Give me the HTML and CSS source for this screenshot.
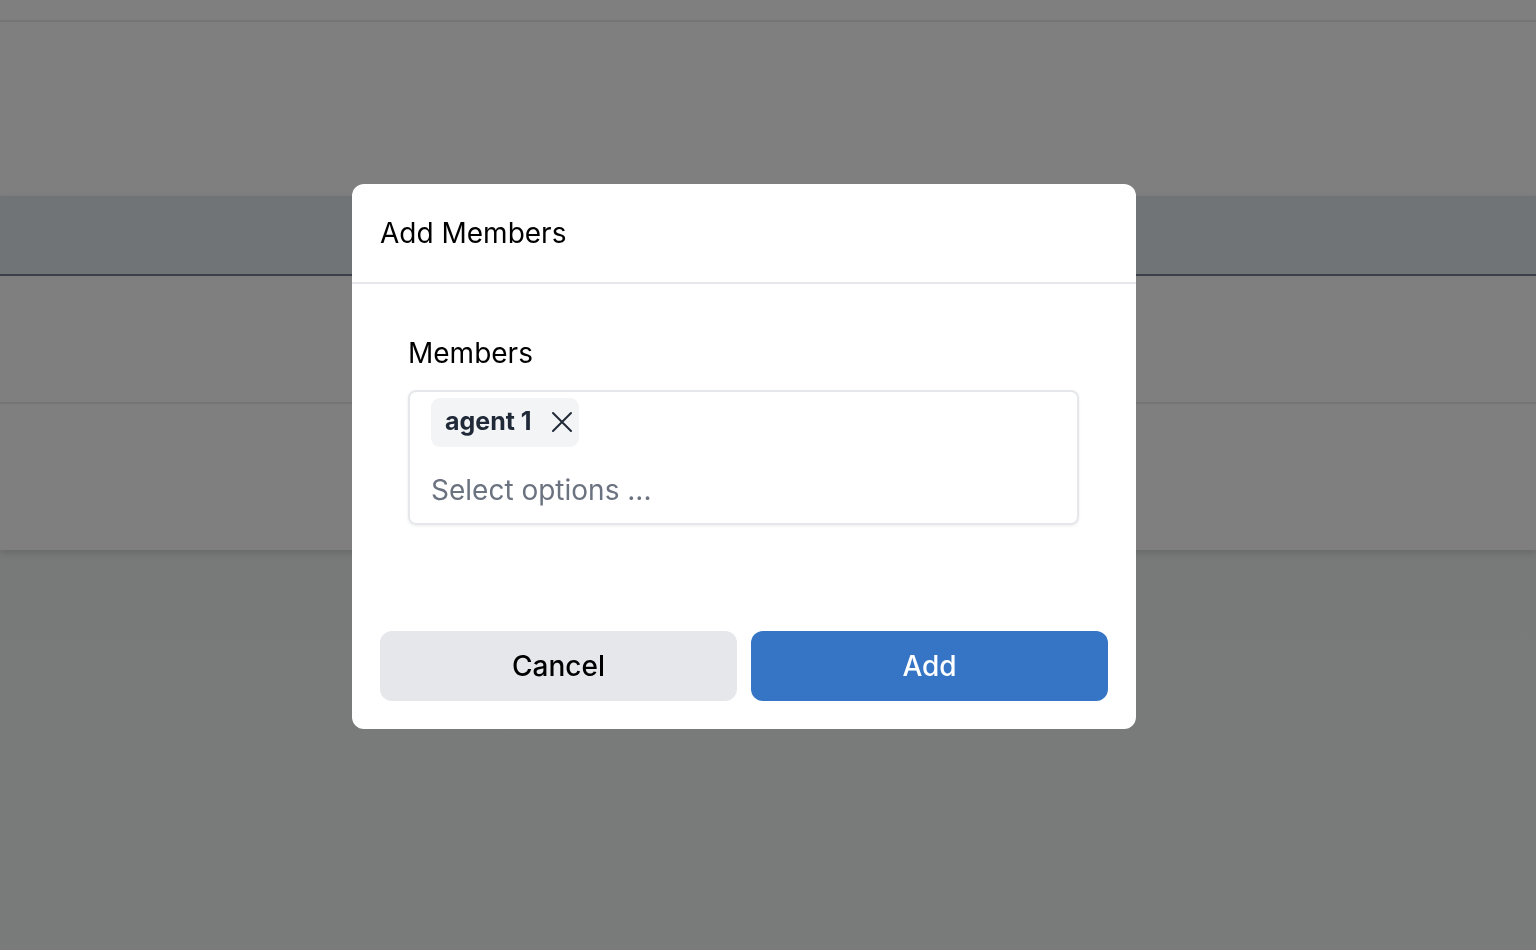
FILE: index.html
```html
<!DOCTYPE html>
<html lang="en">
<head>
<meta charset="utf-8">
<title>Add Members</title>
<link rel="stylesheet" href="styles.css">
</head>
<body>
<div class="page">
  <div class="topbar"></div>
  <div class="spacer"></div>
  <div class="table">
    <div class="thead"></div>
    <div class="row"></div>
    <div class="row last"></div>
  </div>
  <div class="rest"></div>
</div>

<div class="overlay">
  <div class="modal">
    <div class="modal-header">Add Members</div>
    <div class="modal-body">
      <div class="label">Members</div>
      <div class="multiselect">
        <div class="chip">
          <span class="chip-text">agent 1</span>
          <svg class="chip-x" width="22" height="22" viewBox="0 0 22 22" fill="none" stroke="#1f2937" stroke-width="2" stroke-linecap="round"><path d="M2 2L20 20M20 2L2 20"/></svg>
        </div>
        <div class="placeholder">Select options ...</div>
      </div>
    </div>
    <div class="modal-footer">
      <button class="btn btn-cancel">Cancel</button>
      <button class="btn btn-add">Add</button>
    </div>
  </div>
</div>
</body>
</html>
```
FILE: styles.css
```css
* { box-sizing: border-box; }
html, body { margin: 0; padding: 0; }
body {
  width: 1536px;
  height: 950px;
  overflow: hidden;
  font-family: Inter, "Noto Sans", "Liberation Sans", sans-serif;
  background: #f3f5f6;
}
.page { display: flex; flex-direction: column; height: 950px; }
.topbar { height: 22px; background: #fff; border-bottom: 2px solid #ebebeb; }
.spacer { height: 174px; background: #fff; }
.table { background: #fff; box-shadow: 0 3px 8px rgba(0,0,0,0.14); position: relative; z-index: 1; }
.thead { height: 80px; background: #e3e8ef; border-bottom: 2px solid #788195; }
.row { height: 128px; border-bottom: 2px solid #ebebeb; }
.row.last { height: 146px; border-bottom: none; }
.rest { flex: 1; background: linear-gradient(180deg, #f1f3f3, #f3f6f6); }

.overlay {
  position: fixed;
  inset: 0;
  z-index: 10;
  background: rgba(0,0,0,0.5);
  padding: 184px 0 0 352px;
}
.modal {
  width: 784px;
  height: 545px;
  background: #fff;
  border-radius: 12px;
  display: flex;
  flex-direction: column;
  overflow: hidden;
}
.modal-header {
  height: 100px;
  padding: 0 28px;
  display: flex;
  align-items: center;
  padding-bottom: 0;
  font-size: 28px;
  color: #000;
  border-bottom: 2px solid #e5e7eb;
}
.modal-body {
  flex: 1;
  padding: 51px 56px 0 56px;
}
.label {
  font-size: 28px;
  color: #000;
  line-height: 36px;
  margin-bottom: 19px;
}
.multiselect {
  width: 671px;
  height: 135px;
  border: 2px solid #e5e7eb;
  border-radius: 8px;
  box-shadow: 0 1px 3px rgba(0,0,0,0.08);
  padding: 6px 21px;
}
.chip {
  display: inline-flex;
  align-items: center;
  height: 49px;
  padding: 0 6px 0 14px;
  background: #f3f4f6;
  border-radius: 9px;
  gap: 19px;
}
.chip-text {
  font-size: 25px;
  font-weight: 700;
  color: #1f2937;
  line-height: 30px;
  margin-top: -3px;
}
.chip-x { display: block; margin-top: -2px; }
.placeholder {
  margin-top: 23px;
  font-size: 28px;
  color: #6b7280;
  line-height: 40px;
}
.modal-footer {
  display: flex;
  gap: 14px;
  padding: 0 28px 28px 28px;
}
.btn {
  flex: 1;
  height: 70px;
  border: none;
  border-radius: 12px;
  font-family: Inter, "Noto Sans", "Liberation Sans", sans-serif;
  font-size: 28px;
  font-weight: 500;
}
.btn-cancel { background: #e5e7eb; color: #000; }
.btn-add { background: #3674c5; color: #fff; }
```
